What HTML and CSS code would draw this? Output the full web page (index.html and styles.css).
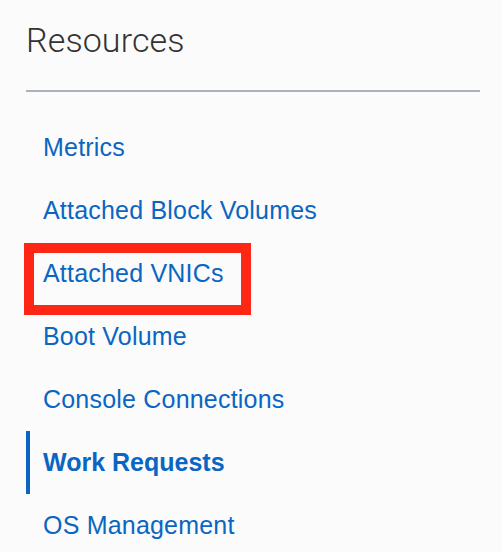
FILE: index.html
```html
<!DOCTYPE html>
<html>
<head>
<meta charset="utf-8">
<link rel="stylesheet" href="styles.css">
</head>
<body>
<div class="panel">
  <h2 class="title">Resources</h2>
  <ul class="nav">
    <li class="item"><a class="link">Metrics</a></li>
    <li class="item"><a class="link">Attached Block Volumes</a></li>
    <li class="item"><a class="link">Attached VNICs</a><span class="highlight"></span></li>
    <li class="item"><a class="link">Boot Volume</a></li>
    <li class="item"><a class="link">Console Connections</a></li>
    <li class="item active"><a class="link">Work Requests</a></li>
    <li class="item"><a class="link">OS Management</a></li>
  </ul>
</div>
</body>
</html>
```
FILE: styles.css
```css
html, body {
  margin: 0;
  padding: 0;
  background: #fbfbfb;
}
.panel {
  padding: 18px 22px 0 26px;
  font-family: "Liberation Sans", Arial, sans-serif;
}
.title {
  margin: 0;
  font-family: Roboto, "Liberation Sans", sans-serif;
  font-size: 34px;
  font-weight: 300;
  color: #333333;
  line-height: 44px;
  padding-bottom: 28px;
  border-bottom: 2px solid #aab2bb;
  letter-spacing: 0.1px;
}
.nav {
  list-style: none;
  margin: 0;
  padding: 24px 0 0 0;
}
.item {
  position: relative;
  height: 63px;
  display: flex;
  align-items: center;
  border-left: 4px solid transparent;
  padding-left: 13px;
}
.link {
  color: #0a66c2;
  font-size: 25px;
  letter-spacing: 0.2px;
}
.item.active {
  border-left-color: #0a66c2;
}
.item.active .link {
  font-weight: bold;
  letter-spacing: 0;
}
.highlight {
  position: absolute;
  left: -6px;
  top: 1px;
  width: 207px;
  height: 52px;
  border: 10px solid #fe2614;
}
```
